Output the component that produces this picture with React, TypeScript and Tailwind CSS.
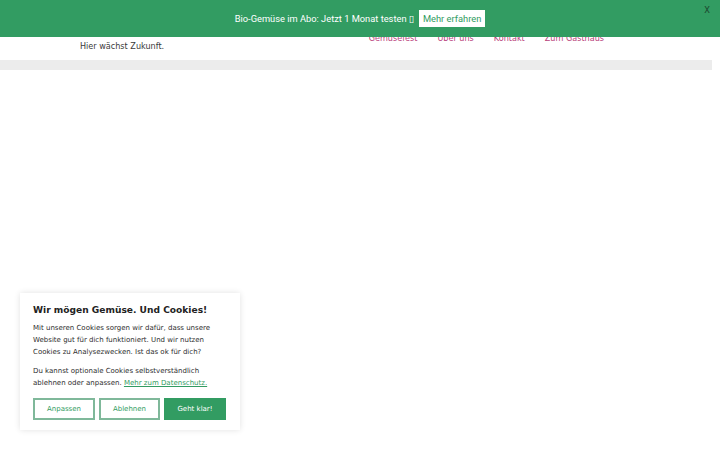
import React from "react";

const dejavu = { fontFamily: '"DejaVu Sans", sans-serif' };
const roboto = { fontFamily: 'Roboto, "DejaVu Sans", sans-serif' };

export default function App() {
  return (
    <div className="relative w-[720px] h-[450px] overflow-hidden bg-white" style={dejavu}>
      {/* site header */}
      <header className="flex items-start pt-[32px] pl-[80px] pr-[116px] h-[60px]">
        <div className="pt-[8px] text-[8.1px] text-[#3a3a3a]">Hier wächst Zukunft.</div>
        <nav className="ml-auto flex gap-[20px] text-[8.1px] text-[#b8407a]">
          <a>Gemüsefest</a>
          <a>Über uns</a>
          <a>Kontakt</a>
          <a>Zum Gasthaus</a>
        </nav>
      </header>
      <div className="h-[10px] w-[712px] bg-[#ececec]" />

      {/* promo bar */}
      <div className="absolute top-0 left-0 w-full h-[37px] bg-[#329c62] flex items-center justify-center" style={roboto}>
        <span className="text-[9.3px] text-white">Bio-Gemüse im Abo: Jetzt 1 Monat testen ▯</span>
        <span className="ml-[5px] bg-white text-[#329c62] text-[9.3px] px-[4px] py-[3px] leading-[11px]">Mehr erfahren</span>
        <span className="absolute right-[10px] top-[4px] text-[9px] text-[#1c4a30]">X</span>
      </div>

      {/* cookie notice */}
      <div className="absolute left-[20px] top-[293px] w-[220px] h-[137px] bg-white shadow-[0_0_6px_rgba(0,0,0,0.12)] px-[13px] pt-[10px]">
        <div className="text-[9.1px] font-bold text-[#222] leading-[14px]">Wir mögen Gemüse. Und Cookies!</div>
        <p className="mt-[5px] text-[7px] leading-[12px] text-[#2e2e2e]">
          Mit unseren Cookies sorgen wir dafür, dass unsere Website gut für dich funktioniert. Und wir nutzen Cookies zu Analysezwecken. Ist das ok für dich?
        </p>
        <p className="mt-[7px] text-[7px] leading-[12px] text-[#2e2e2e]">
          Du kannst optionale Cookies selbstverständlich ablehnen oder anpassen.{" "}
          <span className="text-[#329c62] underline">Mehr zum Datenschutz.</span>
        </p>
        <div className="mt-[9px] flex gap-[4px]">
          <button className="w-[62px] h-[22px] border-2 border-[#7fb89a] text-[#329c62] text-[7px]">Anpassen</button>
          <button className="w-[61px] h-[22px] border-2 border-[#7fb89a] text-[#329c62] text-[7px]">Ablehnen</button>
          <button className="w-[62px] h-[22px] bg-[#329c62] text-white text-[7px]">Geht klar!</button>
        </div>
      </div>
    </div>
  );
}
